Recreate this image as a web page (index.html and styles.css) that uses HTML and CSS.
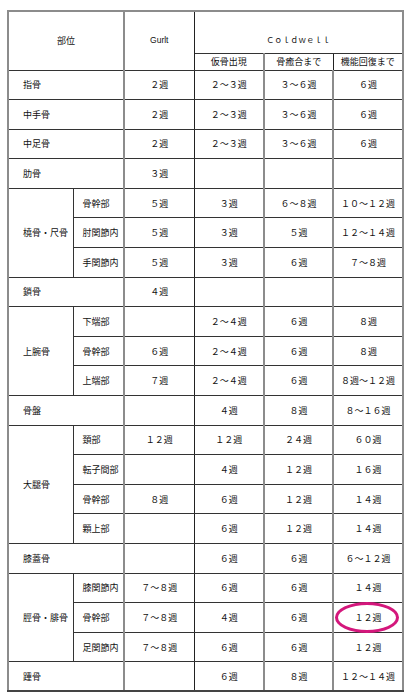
FILE: index.html
```html
<!DOCTYPE html>
<html lang="ja">
<head>
<meta charset="utf-8">
<link rel="stylesheet" href="styles.css">
</head>
<body>
<div class="wrap">
<table class="t">
<colgroup>
<col class="c0"><col class="c1"><col class="c2"><col class="c3"><col class="c4"><col class="c5">
</colgroup>
<thead>
<tr class="h1">
<th colspan="2" rowspan="2" class="edge-l">部位</th>
<th rowspan="2" class="gr gurlt">Gurlt</th>
<th colspan="3" class="cw edge-r">Ｃｏｌｄｗｅｌｌ</th>
</tr>
<tr class="h2">
<th>仮骨出現</th>
<th class="gr">骨癒合まで</th>
<th class="edge-r">機能回復まで</th>
</tr>
</thead>
<tbody>
<tr><td colspan="2" class="lbl edge-l">指骨</td><td class="gr">２週</td><td>２～３週</td><td class="gr">３～６週</td><td class="edge-r">６週</td></tr>
<tr><td colspan="2" class="lbl edge-l">中手骨</td><td class="gr">２週</td><td>２～３週</td><td class="gr">３～６週</td><td class="edge-r">６週</td></tr>
<tr><td colspan="2" class="lbl edge-l">中足骨</td><td class="gr">２週</td><td>２～３週</td><td class="gr">３～６週</td><td class="edge-r">６週</td></tr>
<tr><td colspan="2" class="lbl edge-l">肋骨</td><td class="gr">３週</td><td></td><td class="gr"></td><td class="edge-r"></td></tr>
<tr><td rowspan="3" class="lbl edge-l">橈骨・尺骨</td><td class="sub">骨幹部</td><td class="gr">５週</td><td>３週</td><td class="gr">６～８週</td><td class="edge-r">１０～１２週</td></tr>
<tr><td class="sub">肘関節内</td><td class="gr">５週</td><td>３週</td><td class="gr">５週</td><td class="edge-r">１２～１４週</td></tr>
<tr><td class="sub">手関節内</td><td class="gr">５週</td><td>３週</td><td class="gr">６週</td><td class="edge-r">７～８週</td></tr>
<tr><td colspan="2" class="lbl edge-l">鎖骨</td><td class="gr">４週</td><td></td><td class="gr"></td><td class="edge-r"></td></tr>
<tr><td rowspan="3" class="lbl edge-l">上腕骨</td><td class="sub">下端部</td><td class="gr"></td><td>２～４週</td><td class="gr">６週</td><td class="edge-r">８週</td></tr>
<tr><td class="sub">骨幹部</td><td class="gr">６週</td><td>２～４週</td><td class="gr">６週</td><td class="edge-r">８週</td></tr>
<tr><td class="sub">上端部</td><td class="gr">７週</td><td>２～４週</td><td class="gr">６週</td><td class="edge-r">８週～１２週</td></tr>
<tr><td colspan="2" class="lbl edge-l">骨盤</td><td class="gr"></td><td>４週</td><td class="gr">８週</td><td class="edge-r">８～１６週</td></tr>
<tr><td rowspan="4" class="lbl edge-l">大腿骨</td><td class="sub">頚部</td><td class="gr">１２週</td><td>１２週</td><td class="gr">２４週</td><td class="edge-r">６０週</td></tr>
<tr><td class="sub">転子間部</td><td class="gr"></td><td>４週</td><td class="gr">１２週</td><td class="edge-r">１６週</td></tr>
<tr><td class="sub">骨幹部</td><td class="gr">８週</td><td>６週</td><td class="gr">１２週</td><td class="edge-r">１４週</td></tr>
<tr><td class="sub">顆上部</td><td class="gr"></td><td>６週</td><td class="gr">１２週</td><td class="edge-r">１４週</td></tr>
<tr><td colspan="2" class="lbl edge-l">膝蓋骨</td><td class="gr"></td><td>６週</td><td class="gr">６週</td><td class="edge-r">６～１２週</td></tr>
<tr><td rowspan="3" class="lbl edge-l">脛骨・腓骨</td><td class="sub">膝関節内</td><td class="gr">７～８週</td><td>６週</td><td class="gr">６週</td><td class="edge-r">１４週</td></tr>
<tr><td class="sub">骨幹部</td><td class="gr">７～８週</td><td>４週</td><td class="gr">６週</td><td class="edge-r mark">１２週<span class="ring"></span></td></tr>
<tr><td class="sub">足関節内</td><td class="gr">７～８週</td><td>６週</td><td class="gr">６週</td><td class="edge-r">１２週</td></tr>
<tr><td colspan="2" class="lbl edge-l">踵骨</td><td class="gr"></td><td>６週</td><td class="gr">８週</td><td class="edge-r">１２～１４週</td></tr>
</tbody>
</table>
</div>
</body>
</html>
```
FILE: styles.css
```css
html, body {
  margin: 0;
  padding: 0;
  background: #fff;
}
.wrap {
  padding: 10px 0 0 7px;
}
.t {
  border-collapse: collapse;
  table-layout: fixed;
  width: 395px;
  font-family: "Noto Sans CJK JP", "Liberation Sans", sans-serif;
  font-size: 9px;
  color: #111;
}
.c0 { width: 65px; }
.c1 { width: 51px; }
.c2 { width: 70px; }
.c3 { width: 70px; }
.c4 { width: 69px; }
.c5 { width: 70px; }
.t th, .t td {
  border: 1px solid #333;
  padding: 0;
  text-align: center;
  vertical-align: middle;
  font-weight: normal;
  line-height: 11px;
  white-space: nowrap;
}
.t .gr {
  border-left: 2px solid #8c8c8c;
  border-right: 1px solid #222;
}
.t .edge-l { border-left: 2px solid #8c8c8c; }
.t .edge-r { border-right: 2px solid #8c8c8c; }
.t tbody td:nth-last-child(2) { border-right: 2px solid #8c8c8c; }
.t thead .h1 th { border-top: 2px solid #8c8c8c; }
.t .h1 { height: 42px; }
.t .h2 { height: 17px; }
.t .gurlt {
  font-family: "Liberation Sans", sans-serif;
  font-size: 8.5px;
}
.t .cw {
  vertical-align: bottom;
  padding-bottom: 8px;
  font-size: 8px;
}
.t tbody tr { height: 29.6px; }
.t td.lbl {
  text-align: left;
  padding-left: 14px;
}
.t td.sub {
  text-align: left;
  padding-left: 9px;
}
.t tbody tr:last-child td { border-bottom: 2px solid #444; }
.mark { position: relative; }
.ring {
  position: absolute;
  left: 1px;
  top: -1px;
  width: 64px;
  height: 31px;
  box-sizing: border-box;
  border: 3px solid #d4177c;
  border-radius: 50%;
}
```
